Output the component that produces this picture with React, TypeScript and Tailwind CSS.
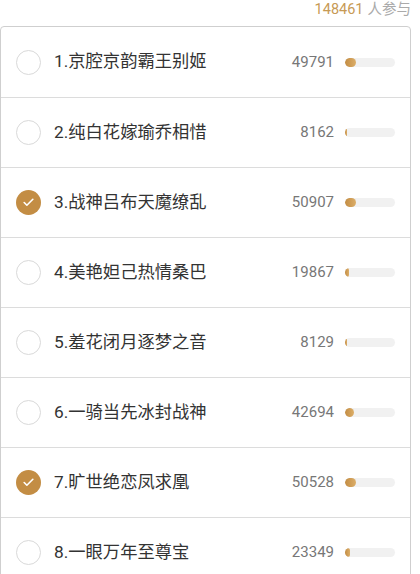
import { Check } from 'lucide-react'

const TOTAL = 148461

const OPTIONS = [
  { name: '京腔京韵霸王别姬', votes: 49791, checked: false },
  { name: '纯白花嫁瑜乔相惜', votes: 8162, checked: false },
  { name: '战神吕布天魔缭乱', votes: 50907, checked: true },
  { name: '美艳妲己热情桑巴', votes: 19867, checked: false },
  { name: '羞花闭月逐梦之音', votes: 8129, checked: false },
  { name: '一骑当先冰封战神', votes: 42694, checked: false },
  { name: '旷世绝恋凤求凰', votes: 50528, checked: true },
  { name: '一眼万年至尊宝', votes: 23349, checked: false },
]

function Radio({ checked }: { checked: boolean }) {
  if (checked) {
    return (
      <div className="w-[25px] h-[25px] rounded-full bg-[#c38d44] flex items-center justify-center">
        <Check size={13} strokeWidth={3} color="#fff" />
      </div>
    )
  }
  return <div className="w-[25px] h-[25px] rounded-full border border-[#d9d9d9] bg-white" />
}

export default function App() {
  return (
    <div
      className="w-[420px] h-[574px] overflow-hidden bg-white"
      style={{ fontFamily: 'Roboto, "Noto Sans CJK SC", sans-serif' }}
    >
      <div className="h-[26px] flex items-start justify-end pr-[9px] text-[14.5px] leading-[20px]">
        <span className="text-[#c79a55]">{TOTAL}</span>
        <span className="text-[#aaa] ml-1">人参与</span>
      </div>
      <div className="w-[411px] border border-[#cfcfcf] rounded-[4px] bg-white">
        {OPTIONS.map((o, i) => {
          const fill = Math.max(1.5, (o.votes / TOTAL) * 32)
          return (
            <div
              key={i}
              className={`h-[70px] flex items-center pl-[15px] pr-[15px] ${i > 0 ? 'border-t border-[#dcdcdc]' : ''}`}
            >
              <Radio checked={o.checked} />
              <div className="ml-[13px] text-[17.3px] text-[#333] flex-1">
                {i + 1}.{o.name}
              </div>
              <div className="text-[15px] text-[#777] mr-[11px]">{o.votes}</div>
              <div className="w-[50px] h-[9px] rounded-full bg-[#f1f1f1] overflow-hidden">
                <div
                  className="h-full rounded-full bg-gradient-to-r from-[#c38d44] to-[#dcae68]"
                  style={{ width: fill }}
                />
              </div>
            </div>
          )
        })}
      </div>
    </div>
  )
}
